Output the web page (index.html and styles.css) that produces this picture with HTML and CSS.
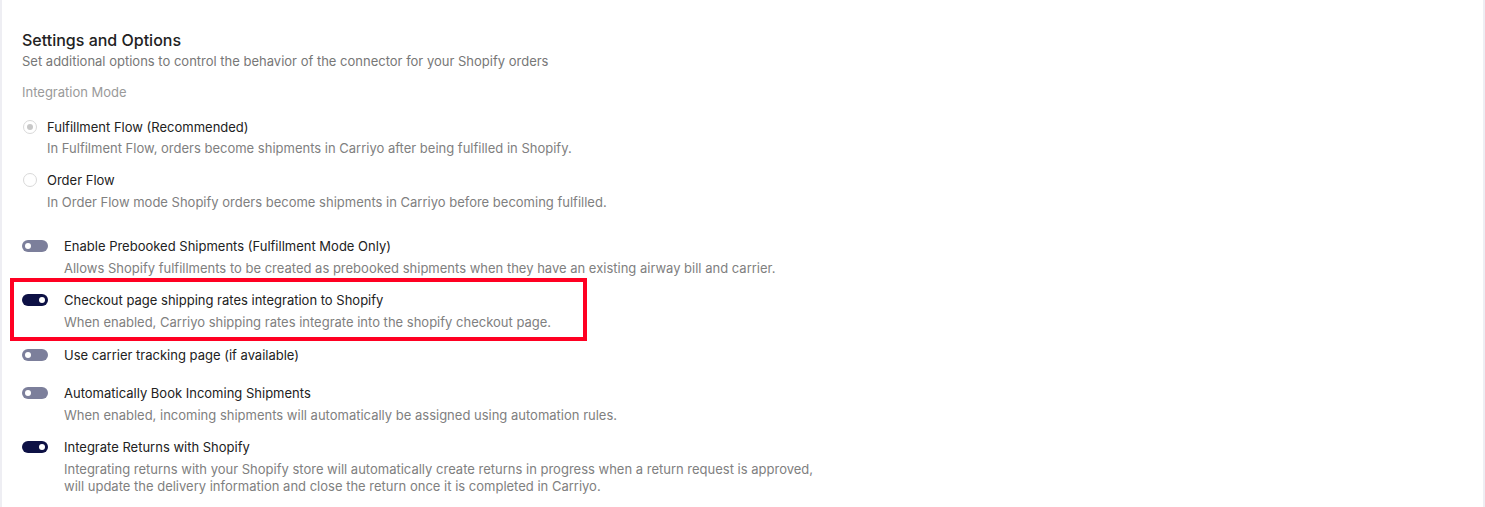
FILE: index.html
```html
<!DOCTYPE html>
<html lang="en">
<head>
    <meta charset="UTF-8">
    <meta name="viewport" content="width=device-width, initial-scale=1.0">
    <title>Settings and Options</title>
    <link rel="stylesheet" href="styles.css">
</head>
<body>

<div class="panel">
    <h2>Settings and Options</h2>
    <p class="subtitle">Set additional options to control the behavior of the connector for your Shopify orders</p>

    <div class="group-label">Integration Mode</div>

    <div class="radio-list">
        <label class="radio-row">
            <span class="radio checked disabled"></span>
            <span class="text">
                <span class="title">Fulfillment Flow (Recommended)</span>
                <span class="desc">In Fulfilment Flow, orders become shipments in Carriyo after being fulfilled in Shopify.</span>
            </span>
        </label>
        <label class="radio-row">
            <span class="radio"></span>
            <span class="text">
                <span class="title">Order Flow</span>
                <span class="desc">In Order Flow mode Shopify orders become shipments in Carriyo before becoming fulfilled.</span>
            </span>
        </label>
    </div>

    <div class="toggle-list">
        <div class="toggle-row">
            <span class="toggle"></span>
            <span class="text">
                <span class="title">Enable Prebooked Shipments (Fulfillment Mode Only)</span>
                <span class="desc">Allows Shopify fulfillments to be created as prebooked shipments when they have an existing airway bill and carrier.</span>
            </span>
        </div>
        <div class="toggle-row highlight">
            <span class="toggle on"></span>
            <span class="text">
                <span class="title">Checkout page shipping rates integration to Shopify</span>
                <span class="desc">When enabled, Carriyo shipping rates integrate into the shopify checkout page.</span>
            </span>
        </div>
        <div class="toggle-row single">
            <span class="toggle"></span>
            <span class="text">
                <span class="title">Use carrier tracking page (if available)</span>
            </span>
        </div>
        <div class="toggle-row">
            <span class="toggle"></span>
            <span class="text">
                <span class="title">Automatically Book Incoming Shipments</span>
                <span class="desc">When enabled, incoming shipments will automatically be assigned using automation rules.</span>
            </span>
        </div>
        <div class="toggle-row">
            <span class="toggle on"></span>
            <span class="text">
                <span class="title">Integrate Returns with Shopify</span>
                <span class="desc">Integrating returns with your Shopify store will automatically create returns in progress when a return request is approved, will update the delivery information and close the return once it is completed in Carriyo.</span>
            </span>
        </div>
    </div>
</div>

</body>
</html>
```

FILE: styles.css
```css
body {
    font-family: 'Inter', 'Noto Sans', sans-serif;
    background-color: #ffffff;
    color: #222222;
    margin: 0;
    padding: 0;
}
.panel {
    border-left: 2px solid #eeeef3;
    border-right: 2px solid #eeeef3;
    padding: 30px 20px 20px 20px;
    min-height: 507px;
    box-sizing: border-box;
}
h2 {
    font-size: 16px;
    font-weight: 500;
    line-height: 20px;
    margin: 0;
    color: #222222;
}
.subtitle {
    font-size: 13px;
    line-height: 17px;
    color: #777777;
    margin: 3px 0 0 0;
}
.group-label {
    font-size: 13px;
    line-height: 17px;
    color: #9a9a9a;
    margin-top: 14px;
}
.radio-list {
    margin-top: 17px;
}
.radio-row {
    display: flex;
    gap: 10px;
    margin-bottom: 14px;
}
.radio {
    width: 14px;
    height: 14px;
    border: 1px solid #d9d9d9;
    border-radius: 50%;
    box-sizing: border-box;
    margin: 2px 0 0 1px;
    flex-shrink: 0;
    position: relative;
}
.radio.checked::after {
    content: '';
    position: absolute;
    left: 3px;
    top: 3px;
    width: 6px;
    height: 6px;
    border-radius: 50%;
    background-color: #c8c8c8;
}
.text {
    display: flex;
    flex-direction: column;
    max-width: 760px;
}
.title {
    font-size: 13px;
    line-height: 18px;
    color: #222222;
}
.desc {
    font-size: 13px;
    line-height: 17px;
    color: #808080;
    margin-top: 5px;
}
.radio-row .desc {
    margin-top: 4px;
}
.radio-row + .radio-row .desc {
    margin-top: 5px;
}
.toggle-list {
    margin-top: 26px;
}
.toggle-row {
    display: flex;
    gap: 16px;
    padding: 0 0 14px 0;
}
.toggle-row.single {
    padding-bottom: 20px;
}
.highlight {
    border: 4px solid #ff0022;
    margin: -13px 0 0 -12px;
    padding: 9px 32px 6px 8px;
    width: fit-content;
    margin-bottom: 5px;
}
.toggle {
    width: 26px;
    height: 12px;
    border-radius: 6px;
    background-color: #7c7f9b;
    margin-top: 3px;
    flex-shrink: 0;
    position: relative;
}
.toggle::after {
    content: '';
    position: absolute;
    left: 3px;
    top: 3px;
    width: 6px;
    height: 6px;
    border-radius: 50%;
    background-color: #ffffff;
}
.toggle.on {
    background-color: #0d1145;
}
.toggle.on::after {
    left: 17px;
}
```
